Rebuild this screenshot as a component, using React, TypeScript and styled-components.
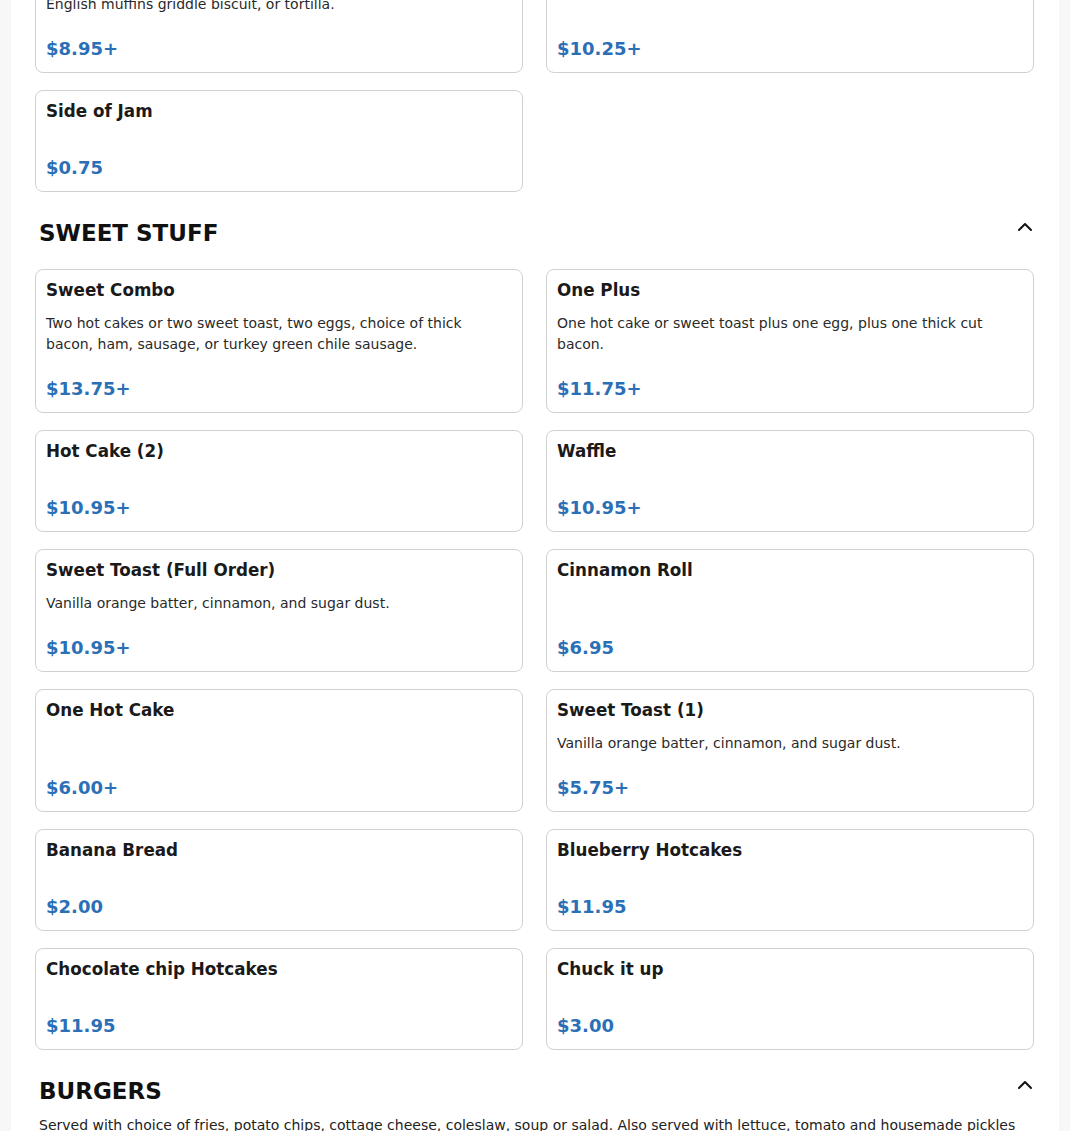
import { ChevronUp } from "lucide-react"
import styled, { createGlobalStyle } from "styled-components"

type MenuItem = {
  name: string
  description?: string
  price: string
}

type MenuSection = {
  title?: string
  note?: string
  items: MenuItem[]
  scrolledPast?: boolean
}

const sections: MenuSection[] = [
  {
    scrolledPast: true,
    items: [
      {
        name: "Breakfast Sandwich",
        description:
          "Two eggs, cheese, and choice of bacon, ham or sausage on toast, English muffins griddle biscuit, or tortilla.",
        price: "$8.95+",
      },
      {
        name: "Breakfast Burrito",
        description: "Eggs, potatoes and cheese with red or green chile.",
        price: "$10.25+",
      },
      { name: "Side of Jam", price: "$0.75" },
    ],
  },
  {
    title: "Sweet Stuff",
    items: [
      {
        name: "Sweet Combo",
        description:
          "Two hot cakes or two sweet toast, two eggs, choice of thick bacon, ham, sausage, or turkey green chile sausage.",
        price: "$13.75+",
      },
      {
        name: "One Plus",
        description:
          "One hot cake or sweet toast plus one egg, plus one thick cut bacon.",
        price: "$11.75+",
      },
      { name: "Hot Cake (2)", price: "$10.95+" },
      { name: "Waffle", price: "$10.95+" },
      {
        name: "Sweet Toast (Full Order)",
        description: "Vanilla orange batter, cinnamon, and sugar dust.",
        price: "$10.95+",
      },
      { name: "Cinnamon Roll", price: "$6.95" },
      { name: "One Hot Cake", price: "$6.00+" },
      {
        name: "Sweet Toast (1)",
        description: "Vanilla orange batter, cinnamon, and sugar dust.",
        price: "$5.75+",
      },
      { name: "Banana Bread", price: "$2.00" },
      { name: "Blueberry Hotcakes", price: "$11.95" },
      { name: "Chocolate chip Hotcakes", price: "$11.95" },
      { name: "Chuck it up", price: "$3.00" },
    ],
  },
  {
    title: "Burgers",
    note: "Served with choice of fries, potato chips, cottage cheese, coleslaw, soup or salad. Also served with lettuce, tomato and housemade pickles",
    items: [
      { name: "Classic Burger", price: "$12.95" },
      { name: "Green Chile Cheeseburger", price: "$13.95" },
    ],
  },
]

export default function App() {
  return (
    <>
      <GlobalStyle />
      <Page>
        {sections.map((section, i) => (
          <Section key={i} $scrolledPast={section.scrolledPast}>
            {section.title && (
              <SectionHeader>
                <SectionTitle>{section.title}</SectionTitle>
                <CollapseButton aria-label="Collapse section">
                  <ChevronUp size={24} strokeWidth={2} />
                </CollapseButton>
              </SectionHeader>
            )}
            {section.note && <SectionNote>{section.note}</SectionNote>}
            <ItemGrid>
              {section.items.map((item) => (
                <Card key={item.name}>
                  <ItemName>{item.name}</ItemName>
                  <ItemDescription>{item.description}</ItemDescription>
                  <ItemPrice>{item.price}</ItemPrice>
                </Card>
              ))}
            </ItemGrid>
          </Section>
        ))}
      </Page>
    </>
  )
}

const GlobalStyle = createGlobalStyle`
  body {
    margin: 0;
    background: #f7f7f7;
    font-family: "DejaVu Sans", "Liberation Sans", sans-serif;
    color: #1a1a1a;
    overflow: hidden;
  }
`

const Page = styled.main`
  width: 1048px;
  margin: 0 auto;
  min-height: 100vh;
  background: #ffffff;
  padding-bottom: 40px;
`

// the first section is the tail of the one above, scrolled mostly out of view
const Section = styled.section<{ $scrolledPast?: boolean }>`
  display: flex;
  flex-direction: column;
  margin-top: ${(p) => (p.$scrolledPast ? "-71px" : "0")};
`

const SectionHeader = styled.div`
  display: flex;
  justify-content: space-between;
  align-items: flex-start;
  padding: 27px 22px 0 28px;
  margin-bottom: 22px;
`

const SectionTitle = styled.h2`
  margin: 0;
  font-size: 23px;
  line-height: 28px;
  font-weight: 700;
  text-transform: uppercase;
  color: #111111;
`

const CollapseButton = styled.button`
  display: flex;
  padding: 0;
  margin-top: -4px;
  border: 0;
  background: none;
  color: #111111;
  cursor: pointer;
`

const SectionNote = styled.p`
  margin: -13px 28px 18px;
  font-size: 14px;
  line-height: 22px;
  color: #222222;
`

const ItemGrid = styled.div`
  display: grid;
  grid-template-columns: 1fr 1fr;
  column-gap: 23px;
  row-gap: 17px;
  padding: 0 25px 0 24px;
`

const Card = styled.div`
  display: flex;
  flex-direction: column;
  border: 1px solid #d1d1d1;
  border-radius: 8px;
  padding: 10px;
  background: #ffffff;
`

const ItemName = styled.h3`
  margin: 0 0 13px;
  font-size: 16.75px;
  line-height: 20px;
  font-weight: 700;
  color: #1a1a1a;
`

const ItemDescription = styled.p`
  margin: 0 0 20px;
  font-size: 14px;
  line-height: 21px;
  color: #2a2a2a;
`

const ItemPrice = styled.span`
  margin-top: auto;
  font-size: 18px;
  line-height: 27px;
  font-weight: 700;
  color: #2b70b6;
`
